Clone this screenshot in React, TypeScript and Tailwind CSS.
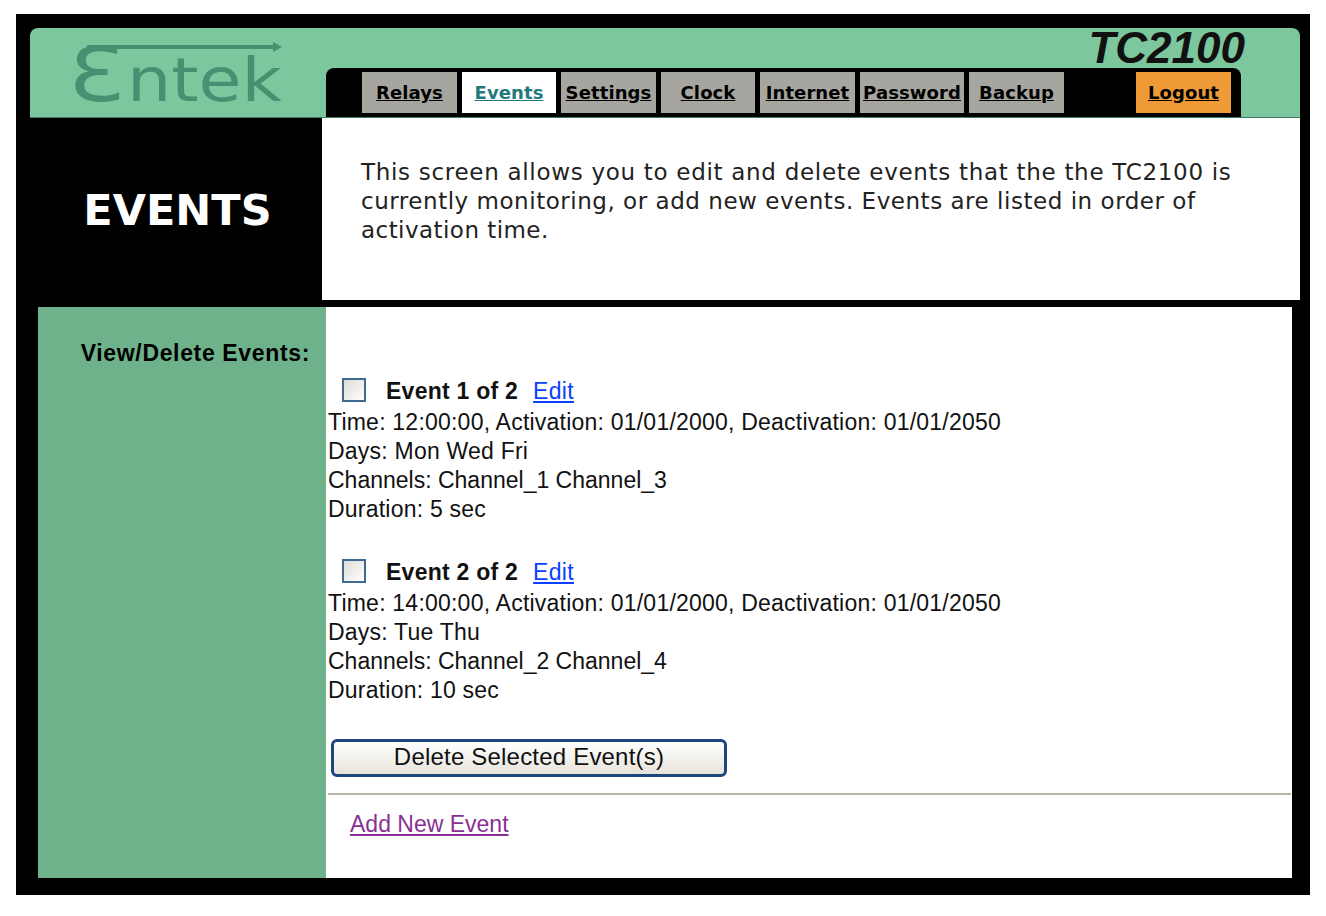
import React from 'react';

const tabs = [
    { label: 'Relays', width: 'w-[95px]', mr: 'mr-[5px]', bg: 'bg-[#a6a59f]', color: 'text-black' },
    { label: 'Events', width: 'w-[94px]', mr: 'mr-[5px]', bg: 'bg-white', color: 'text-[#1f7a7a]' },
    { label: 'Settings', width: 'w-[95px]', mr: 'mr-[5px]', bg: 'bg-[#a6a59f]', color: 'text-black' },
    { label: 'Clock', width: 'w-[94px]', mr: 'mr-[5px]', bg: 'bg-[#a6a59f]', color: 'text-black' },
    { label: 'Internet', width: 'w-[95px]', mr: 'mr-[5px]', bg: 'bg-[#a6a59f]', color: 'text-black' },
    { label: 'Password', width: 'w-[104px]', mr: 'mr-[5px]', bg: 'bg-[#a6a59f]', color: 'text-black' },
    { label: 'Backup', width: 'w-[95px]', mr: 'mr-[72px]', bg: 'bg-[#a6a59f]', color: 'text-black' },
    { label: 'Logout', width: 'w-[95px]', mr: '', bg: 'bg-[#ee9a36]', color: 'text-black' },
];

const events = [
    {
        title: 'Event 1 of 2',
        time: 'Time: 12:00:00, Activation: 01/01/2000, Deactivation: 01/01/2050',
        days: 'Days: Mon Wed Fri',
        channels: 'Channels: Channel_1 Channel_3',
        duration: 'Duration: 5 sec',
    },
    {
        title: 'Event 2 of 2',
        time: 'Time: 14:00:00, Activation: 01/01/2000, Deactivation: 01/01/2050',
        days: 'Days: Tue Thu',
        channels: 'Channels: Channel_2 Channel_4',
        duration: 'Duration: 10 sec',
    },
];

const Logo: React.FC = () => (
    <svg width="220" height="72" viewBox="0 0 220 72" className="ml-[38px] mt-[12px] overflow-visible">
        <text
            x="0"
            y="61"
            fontFamily="'DejaVu Sans', sans-serif"
            fontSize="74"
            fill="#4a8f72"
            textLength="56"
            lengthAdjust="spacingAndGlyphs"
        >
            Ɛ
        </text>
        <text
            x="59"
            y="61"
            fontFamily="'DejaVu Sans', sans-serif"
            fontSize="60"
            fill="#4a8f72"
            textLength="155"
            lengthAdjust="spacingAndGlyphs"
        >
            ntek
        </text>
        <path d="M19 7 H208" stroke="#4a8f72" strokeWidth="4" fill="none" />
        <path d="M205 2 L214 7 L205 12 Z" fill="#4a8f72" />
    </svg>
);

const EventBlock: React.FC<{ event: (typeof events)[number] }> = ({ event }) => (
    <div className="h-[181px]">
        <div className="flex h-[29px] items-center pl-[14px]">
            <span className="mb-[3px] h-[24px] w-[24px] border-2 border-[#3f6a94] bg-gradient-to-br from-[#dcdcd7] to-white" />
            <span className="ml-[20px] text-[23px] font-bold tracking-[0.25px]">{event.title}</span>
            <a href="#" className="ml-[15px] tracking-[0.3px] text-[#0a40ff] underline">Edit</a>
        </div>
        <div className="mt-[2px]">{event.time}</div>
        <div>{event.days}</div>
        <div className="tracking-normal">{event.channels}</div>
        <div>{event.duration}</div>
    </div>
);

const App: React.FC = () => {
    return (
        <div className="h-[916px] w-[1326px] bg-white pl-[16px] pt-[14px]">
            <div className="h-[881px] w-[1294px] bg-black pl-[14px] pt-[14px]">
                {/* header */}
                <div className="flex h-[90px] w-[1270px] rounded-t-[8px] border-b border-[#3f7a64] bg-[#7cc79d]">
                    <div className="w-[296px]">
                        <Logo />
                    </div>
                    <div className="flex w-[974px] flex-col">
                        <div className="h-[40px] w-[919px] text-right font-['Liberation_Sans',sans-serif] text-[44px] leading-[40px] font-bold italic text-[#111]">
                            TC2100
                        </div>
                        <div className="flex h-[50px] w-[915px] rounded-t-[8px] bg-black pl-[36px] pt-[4px]">
                            {tabs.map((tab) => (
                                <div
                                    key={tab.label}
                                    className={`flex h-[41px] items-center justify-center font-['DejaVu_Sans',sans-serif] text-[18px] font-bold tracking-[0.1px] underline ${tab.width} ${tab.mr} ${tab.bg} ${tab.color}`}
                                >
                                    {tab.label}
                                </div>
                            ))}
                        </div>
                    </div>
                </div>

                {/* page title and intro */}
                <div className="flex h-[182px] w-[1270px]">
                    <div className="flex w-[292px] items-center justify-center pl-[3px] pt-[3px] font-['DejaVu_Sans',sans-serif] text-[43px] font-bold text-white">
                        EVENTS
                    </div>
                    <div className="w-[978px] bg-white pl-[39px] pt-[40px] font-['DejaVu_Sans',sans-serif] text-[23px] leading-[29px] text-[#222]">
                        <div className="tracking-[0.7px]">This screen allows you to edit and delete events that the the TC2100 is</div>
                        <div className="tracking-[0.53px]">currently monitoring, or add new events. Events are listed in order of</div>
                        <div className="tracking-[0.45px]">activation time.</div>
                    </div>
                </div>

                {/* events */}
                <div className="ml-[8px] mt-[7px] flex h-[571px] w-[1254px] font-['Liberation_Sans',sans-serif] text-[23px] leading-[29px] tracking-[0.22px] text-[#111]">
                    <div className="w-[288px] bg-[#6eb28b] pr-[16px] pt-[32px] text-right font-bold tracking-[0.65px] text-black">
                        View/Delete Events:
                    </div>
                    <div className="w-[966px] bg-white pl-[2px] pt-[70px]">
                        {events.map((event) => (
                            <EventBlock key={event.title} event={event} />
                        ))}
                        <button className="ml-[3px] flex h-[38px] w-[396px] items-center justify-center rounded-[6px] border-[3px] border-[#1c4680] bg-gradient-to-b from-white to-[#e6e4da] pb-[3px] text-[24px] tracking-[0.2px]">
                            Delete Selected Event(s)
                        </button>
                        <div className="mt-[16px] h-[2px] w-[963px] bg-[#b8b5a6]" />
                        <a href="#" className="ml-[22px] mt-[15px] inline-block tracking-normal text-[#8a2f96] underline">
                            Add New Event
                        </a>
                    </div>
                </div>
            </div>
        </div>
    );
};

export default App;
